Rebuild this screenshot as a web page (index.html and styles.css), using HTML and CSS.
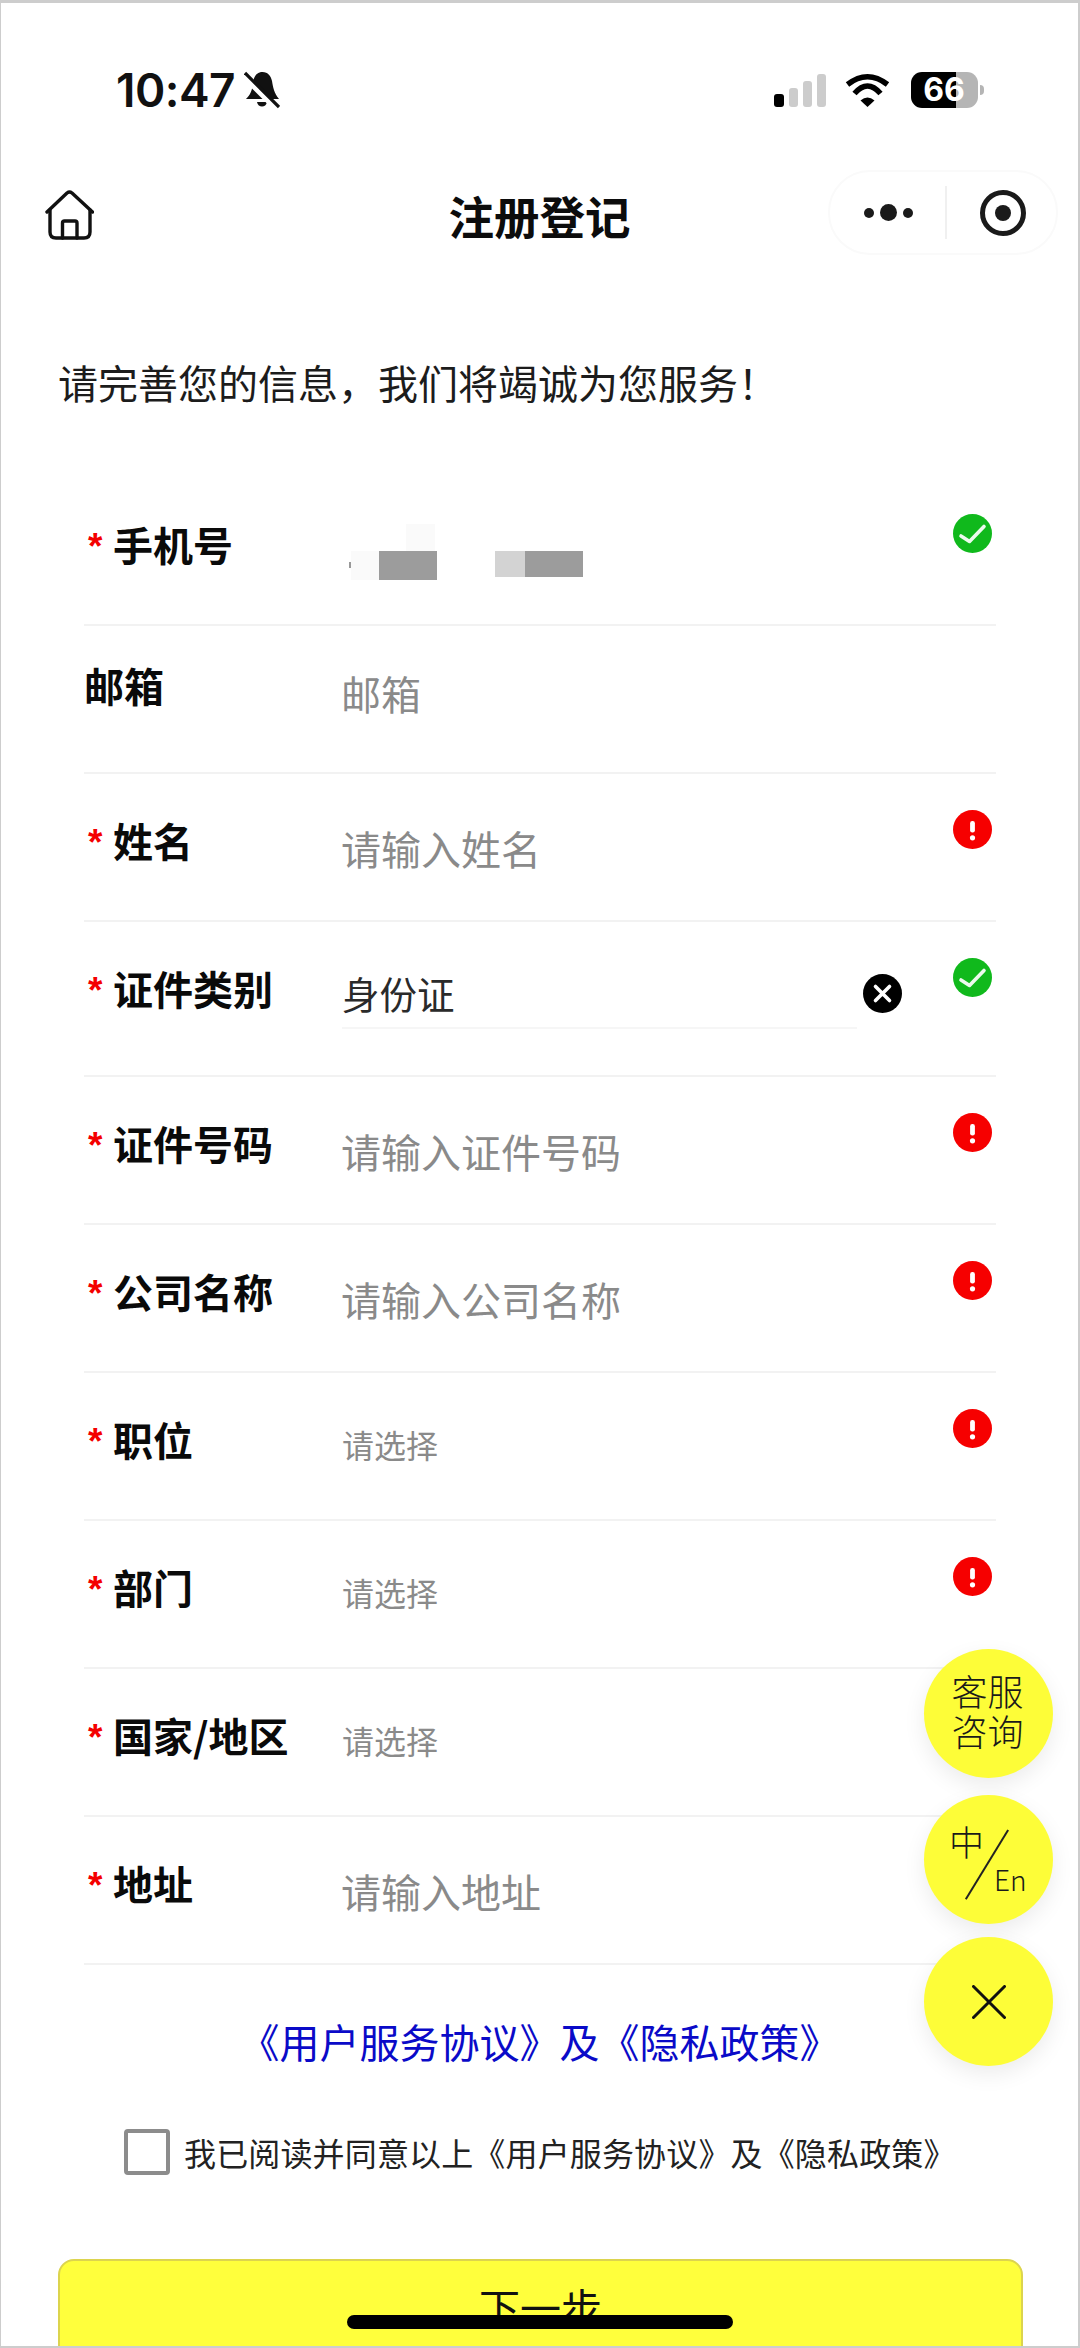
FILE: index.html
```html
<!DOCTYPE html>
<html lang="zh-CN">
<head>
    <meta charset="UTF-8">
    <meta name="viewport" content="width=device-width, initial-scale=1.0">
    <title>注册登记</title>
    <link rel="stylesheet" href="styles.css">
</head>
<body>
    <svg class="defs" width="0" height="0">
        <symbol id="ok" viewBox="0 0 39 39">
            <circle cx="19.5" cy="19.5" r="19.5" fill="#10b91c"/>
            <path d="M8 22l8.5 5.5L31 12.5" fill="none" stroke="#fff" stroke-width="3.6" stroke-linecap="round" stroke-linejoin="round" opacity=".92"/>
        </symbol>
        <symbol id="err" viewBox="0 0 39 39">
            <circle cx="19.5" cy="19.5" r="19.5" fill="#f60000"/>
            <rect x="17.1" y="11" width="4.8" height="11.5" rx="2.2" fill="#fff"/>
            <circle cx="19.5" cy="27.8" r="2.6" fill="#fff"/>
        </symbol>
    </svg>

    <div class="page">
        <div class="status-bar">
            <div class="status-time">
                <span class="time">10:47</span>
                <svg class="bell" viewBox="0 0 36 38" width="36" height="38">
                    <path d="M18.5 1C24 1 27 5 28 10c1 6 2 12 7 18H2c4-4 6-8 6.500-14C9 7 12 1 18.500 1z" fill="#111"/>
                    <path d="M13 31h10c-1 6-9 6-10 0z" fill="#111"/>
                    <path d="M-2 4L34 40" stroke="#fff" stroke-width="5"/>
                    <path d="M1 2l34 34" stroke="#111" stroke-width="3.200"/>
                </svg>
            </div>
            <div class="status-icons">
                <div class="signal">
                    <i class="bar bar-1"></i><i class="bar bar-2"></i><i class="bar bar-3"></i><i class="bar bar-4"></i>
                </div>
                <svg class="wifi" viewBox="0 0 46 34" width="46" height="34">
                    <path d="M2.500 11.500Q22.500-4 42.500 11.500" fill="none" stroke="#000" stroke-width="5.500"/>
                    <path d="M9.500 20.500Q22.500 5.500 35.500 20.500" fill="none" stroke="#000" stroke-width="5.500"/>
                    <path d="M15.500 27.500Q22.500 21.500 29.500 27.500L22.500 34z" fill="#000"/>
                </svg>
                <div class="battery"><span>66</span></div>
            </div>
        </div>

        <div class="nav">
            <svg class="home" viewBox="0 0 49 50" width="49" height="50" fill="none" stroke="#111" stroke-width="3.400" stroke-linecap="round" stroke-linejoin="round">
                <path d="M2 22L22 3q2.500-2 5 0l20.500 19"/>
                <path d="M5 20v22q0 6 6 6h28q6 0 6-6V20"/>
                <path d="M17.500 48V33q0-2 2-2H30q2 0 2 2v15"/>
            </svg>
            <div class="nav-title">注册登记</div>
            <div class="capsule">
                <div class="capsule-more"><i class="dot"></i><i class="dot dot-big"></i><i class="dot"></i></div>
                <div class="capsule-line"></div>
                <div class="capsule-target"><i></i></div>
            </div>
        </div>

        <p class="intro">请完善您的信息，我们将竭诚为您服务！</p>

        <div class="form-list">
            <div class="field">
                <div class="label"><span class="star">*</span>手机号</div>
                <div class="value">
                    <svg class="phone-mask" viewBox="0 0 245 62" width="245" height="62">
                        <rect x="62" y="6" width="29" height="27" fill="#fafafa"/>
                        <rect x="7" y="33" width="28" height="29" fill="#fafafa"/>
                        <rect x="35" y="33" width="58" height="29" fill="#9c9c9c"/>
                        <rect x="5" y="44" width="2" height="6" fill="#999"/>
                        <rect x="151" y="33" width="30" height="26" fill="#d3d3d3"/>
                        <rect x="181" y="33" width="58" height="26" fill="#9c9c9c"/>
                    </svg>
                </div>
                <svg class="state"><use href="#ok"/></svg>
            </div>
            <div class="field field-plain">
                <div class="label">邮箱</div>
                <div class="value input hint">邮箱</div>
            </div>
            <div class="field">
                <div class="label"><span class="star">*</span>姓名</div>
                <div class="value input hint">请输入姓名</div>
                <svg class="state"><use href="#err"/></svg>
            </div>
            <div class="field field-tall">
                <div class="label"><span class="star">*</span>证件类别</div>
                <div class="value pick-filled">
                    <div class="filled">身份证</div>
                    <svg class="clear" viewBox="0 0 39 39" width="39" height="39">
                        <circle cx="19.500" cy="19.500" r="19.500" fill="#000"/>
                        <path d="M12.500 12.500l14 14M26.500 12.500l-14 14" stroke="#fff" stroke-width="3.600" stroke-linecap="round"/>
                    </svg>
                </div>
                <svg class="state"><use href="#ok"/></svg>
            </div>
            <div class="field">
                <div class="label"><span class="star">*</span>证件号码</div>
                <div class="value input hint">请输入证件号码</div>
                <svg class="state"><use href="#err"/></svg>
            </div>
            <div class="field">
                <div class="label"><span class="star">*</span>公司名称</div>
                <div class="value input hint">请输入公司名称</div>
                <svg class="state"><use href="#err"/></svg>
            </div>
            <div class="field">
                <div class="label"><span class="star">*</span>职位</div>
                <div class="value select hint">请选择</div>
                <svg class="state"><use href="#err"/></svg>
            </div>
            <div class="field">
                <div class="label"><span class="star">*</span>部门</div>
                <div class="value select hint">请选择</div>
                <svg class="state"><use href="#err"/></svg>
            </div>
            <div class="field">
                <div class="label"><span class="star">*</span>国家/地区</div>
                <div class="value select hint">请选择</div>
            </div>
            <div class="field">
                <div class="label"><span class="star">*</span>地址</div>
                <div class="value input hint">请输入地址</div>
            </div>
        </div>

        <a class="terms-link">《用户服务协议》及《隐私政策》</a>

        <div class="agree">
            <span class="checkbox"></span>
            <span class="agree-text">我已阅读并同意以上《用户服务协议》及《隐私政策》</span>
        </div>

        <button class="next-btn">下一步</button>

        <div class="float-btns">
            <div class="float-btn float-help">客服<br>咨询</div>
            <div class="float-btn float-lang">
                <span class="lang-zh">中</span>
                <i class="lang-slash"></i>
                <span class="lang-en">En</span>
            </div>
            <div class="float-btn float-close">
                <svg viewBox="0 0 34 34" width="34" height="34">
                    <path d="M1.500 1.500l31 31M32.500 1.500l-31 31" stroke="#111" stroke-width="3" stroke-linecap="round"/>
                </svg>
            </div>
        </div>

        <div class="home-indicator"></div>
    </div>
</body>
</html>
```

FILE: styles.css
```css
* { margin: 0; padding: 0; box-sizing: border-box; }

body {
    font-family: "Noto Sans CJK SC", "Noto Sans", sans-serif;
    background: #fff;
    color: #111;
}

.defs { position: absolute; }

.page {
    position: relative;
    width: 1080px;
    height: 2348px;
    overflow: hidden;
    border-style: solid;
    border-color: #cdcdcd;
    border-width: 3px 2px 2px 1px;
    background: #fff;
}

/* status bar */
.status-bar {
    height: 124px;
    padding: 69px 94px 0 115px;
    display: flex;
    justify-content: space-between;
    align-items: flex-start;
}

.status-time { display: flex; align-items: center; gap: 9px; height: 36px; }

.time {
    font-family: Inter, sans-serif;
    font-size: 46px;
    font-weight: 600;
    line-height: 36px;
    letter-spacing: -0.5px;
    color: #111;
}

.status-icons { display: flex; align-items: center; gap: 19px; height: 36px; }

.signal { display: flex; align-items: flex-end; gap: 5px; height: 33px; }

.bar { width: 9px; background: #cccccc; border-radius: 3px; }
.bar-1 { height: 13px; background: #000; width: 10px; }
.bar-2 { height: 19px; }
.bar-3 { height: 26px; }
.bar-4 { height: 33px; }

.wifi { margin-right: 1px; }

.battery {
    position: relative;
    width: 67px;
    height: 36px;
    border-radius: 11px;
    background: linear-gradient(90deg, #000 0, #000 45px, #b5b5b5 45px);
    display: flex;
    align-items: center;
    justify-content: center;
    margin-right: 6px;
}

.battery::after {
    content: "";
    position: absolute;
    left: 69px;
    top: 13px;
    width: 4px;
    height: 10px;
    border-radius: 0 4px 4px 0;
    background: #b5b5b5;
}

.battery span {
    font-family: Inter, sans-serif;
    font-size: 32px;
    font-weight: 700;
    line-height: 36px;
    color: #fff;
    margin-right: 1px;
}

/* nav */
.nav {
    margin-top: 43px;
    height: 85px;
    padding: 0 20px;
    display: grid;
    grid-template-columns: minmax(0, 1fr) auto minmax(0, 1fr);
    align-items: center;
}

.nav-title {
    font-size: 45.500px;
    font-weight: 700;
    line-height: 60px;
    margin-top: 4px;
    color: #0c0c0c;
}

.home { margin: 4px 0 0 24px; }

.capsule {
    justify-self: end;
    width: 230px;
    height: 85px;
    flex-shrink: 0;
    border: 2px solid #fafafa;
    border-radius: 42px;
    display: flex;
    align-items: center;
}

.capsule-more {
    width: 115px;
    display: flex;
    align-items: center;
    justify-content: center;
    gap: 6px;
    padding-left: 1px;
}

.dot { width: 10px; height: 10px; border-radius: 50%; background: #1a1a1a; }
.dot-big { width: 17px; height: 17px; }

.capsule-line { width: 2px; height: 53px; background: #f0f0f0; }

.capsule-target {
    width: 46px;
    height: 46px;
    margin-left: 33px;
    border: 5px solid #1a1a1a;
    border-radius: 50%;
    display: flex;
    align-items: center;
    justify-content: center;
}

.capsule-target i { width: 16px; height: 16px; border-radius: 50%; background: #1a1a1a; }

.intro {
    margin: 99px 0 0 57px;
    font-size: 40px;
    line-height: 56px;
    color: #1c1c1c;
}

/* form */
.form-list { margin: 68px 82px 0 83px; }

.field {
    height: 148px;
    display: flex;
    align-items: flex-start;
    border-bottom: 2px solid #f2f2f2;
}

.field-tall { height: 155px; }

.label {
    width: 258px;
    margin-top: 38px;
    display: flex;
    font-size: 40px;
    font-weight: 700;
    line-height: 56px;
    color: #0a0a0a;
    white-space: nowrap;
}

.field-plain .label { margin-top: 31px; }

.star {
    width: 29px;
    padding: 3px 0 0 4px;
    font-family: "Liberation Sans", sans-serif;
    font-size: 37px;
    font-weight: 700;
    color: #f40000;
}

.value { flex: 1; min-width: 0; }

.hint { flex: 0 1 auto; margin-right: auto; color: #8a8a8a; }

.input { margin: 46px auto 0 -1px; font-size: 40px; line-height: 56px; }
.field-plain .input { margin-top: 39px; }

.select { margin-top: 43px; font-size: 32px; line-height: 56px; }

.phone-mask { display: block; margin: 40px 0 0 2px; }

.pick-filled { display: flex; align-items: center; margin-top: 43px; }

.filled {
    width: 515px;
    height: 64px;
    font-size: 37.500px;
    line-height: 56px;
    color: #2a2a2a;
    border-bottom: 2px solid #f6f6f6;
}

.clear { margin: -8px 0 0 6px; flex-shrink: 0; }

.state {
    width: 39px;
    height: 39px;
    margin: 36px 4px 0 0;
    flex-shrink: 0;
}

/* bottom */
.terms-link {
    display: block;
    margin-top: 48px;
    text-align: center;
    font-size: 40px;
    line-height: 56px;
    color: #0a0ac8;
}

.agree {
    margin: 60px 0 0 123px;
    display: flex;
    align-items: center;
    gap: 14px;
}

.checkbox {
    width: 46px;
    height: 46px;
    border: 4px solid #8c8c8c;
    border-radius: 4px;
    flex-shrink: 0;
}

.agree-text { font-size: 32px; letter-spacing: .15px; line-height: 46px; color: #222; }

.next-btn {
    display: block;
    width: 965px;
    height: 120px;
    margin: 84px 0 0 57px;
    padding-bottom: 26px;
    font-family: inherit;
    font-size: 41px;
    line-height: 56px;
    text-align: center;
    color: #111;
    background: #ffff3c;
    border: 2px solid #dcd44e;
    border-radius: 16px;
}

/* floating buttons */
.float-btns {
    position: absolute;
    right: 25px;
    top: 1646px;
    display: flex;
    flex-direction: column;
    gap: 13px;
}

.float-btn {
    position: relative;
    width: 129px;
    height: 129px;
    border-radius: 50%;
    background: #fdfd38;
    box-shadow: 0 8px 22px rgba(0, 0, 0, .08);
    display: flex;
    align-items: center;
    justify-content: center;
}

.float-help {
    padding: 0 2px 8px 0;
    font-size: 36px;
    font-weight: 300;
    line-height: 40px;
    text-align: center;
    color: #1a1a1a;
}

.float-lang { margin-top: 4px; }

.lang-zh {
    position: absolute;
    left: 25px;
    top: 21px;
    font-size: 35px;
    font-weight: 300;
    line-height: 50px;
    color: #1a1a1a;
}

.lang-en {
    position: absolute;
    left: 70px;
    top: 65px;
    font-size: 28px;
    font-weight: 300;
    line-height: 38px;
    color: #1a1a1a;
}

.lang-slash {
    position: absolute;
    left: 62px;
    top: 29px;
    width: 1.500px;
    height: 81px;
    background: #222;
    transform: rotate(31.500deg);
}

.home-indicator {
    position: absolute;
    left: 346px;
    top: 2312px;
    width: 386px;
    height: 14px;
    border-radius: 7px;
    background: #000;
}
```
